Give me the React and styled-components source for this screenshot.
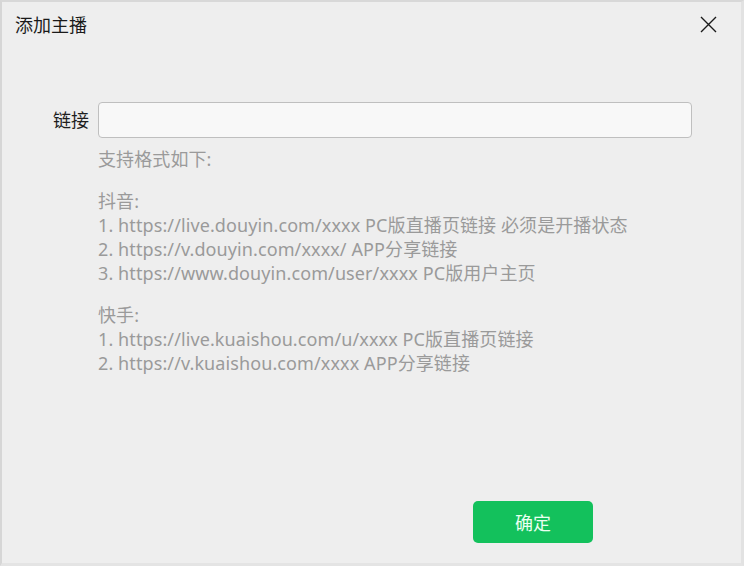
import React from "react";
import styled, { createGlobalStyle } from "styled-components";

const GlobalStyle = createGlobalStyle`
  html, body {
    margin: 0;
    padding: 0;
    background: #eeeeee;
  }
  * { box-sizing: border-box; }
`;

const FONT = `"Noto Sans", "Noto Sans CJK SC", sans-serif`;

const Window = styled.div`
  width: 744px;
  height: 566px;
  background: #eeeeee;
  border-top: 2px solid #d8d8d8;
  border-left: 2px solid #d6d6d6;
  border-right: 3px solid #e2e2e2;
  border-bottom: 3px solid #e4e4e4;
  display: flex;
  flex-direction: column;
  font-family: ${FONT};
`;

const TitleBar = styled.div`
  display: flex;
  align-items: center;
  justify-content: space-between;
  padding: 9px 24px 0 13px;
  height: 36px;
`;

const Title = styled.div`
  font-size: 18px;
  color: #1a1a1a;
  line-height: 24px;
`;

const CloseButton = styled.button`
  width: 18px;
  height: 18px;
  padding: 0;
  border: none;
  background: transparent;
  display: flex;
  align-items: center;
  justify-content: center;
  cursor: pointer;
`;

const Body = styled.div`
  flex: 1;
  padding: 64px 0 0 51px;
  display: flex;
  flex-direction: column;
`;

const FieldRow = styled.div`
  display: flex;
  align-items: center;
  gap: 9px;
`;

const Label = styled.label`
  font-size: 18px;
  color: #1e1e1e;
  line-height: 24px;
  width: 36px;
  white-space: nowrap;
`;

const Input = styled.input`
  width: 594px;
  height: 36px;
  border: 1px solid #bfbfbf;
  border-radius: 4px;
  background: #f8f8f8;
  outline: none;
  font-family: ${FONT};
  font-size: 16px;
  padding: 0 8px;
`;

const Help = styled.div`
  margin: 9px 0 0 45px;
  color: #9a9a9a;
  font-size: 18px;
  line-height: 24px;
  letter-spacing: 0.1px;
`;

const Para = styled.p`
  margin: 0 0 18px 0;
`;

const Line = styled.div`
  white-space: nowrap;
`;

const Footer = styled.div`
  display: flex;
  padding: 0 0 20px 471px;
`;

const PrimaryButton = styled.button`
  width: 120px;
  height: 42px;
  border: none;
  border-radius: 5px;
  background: #13c15c;
  color: #eafff1;
  font-family: ${FONT};
  font-size: 18px;
  cursor: pointer;
`;

const groups = [
  {
    head: "支持格式如下:",
    lines: [],
  },
  {
    head: "抖音:",
    lines: [
      "1. https://live.douyin.com/xxxx PC版直播页链接 必须是开播状态",
      "2. https://v.douyin.com/xxxx/ APP分享链接",
      "3. https://www.douyin.com/user/xxxx PC版用户主页",
    ],
  },
  {
    head: "快手:",
    lines: [
      "1. https://live.kuaishou.com/u/xxxx PC版直播页链接",
      "2. https://v.kuaishou.com/xxxx APP分享链接",
    ],
  },
];

export default function App() {
  return (
    <>
      <GlobalStyle />
      <Window>
        <TitleBar>
          <Title>添加主播</Title>
          <CloseButton aria-label="关闭">
            <svg width="17" height="17" viewBox="0 0 17 17">
              <path d="M1 1 L16 16 M16 1 L1 16" stroke="#1a1a1a" strokeWidth="1.4" fill="none" />
            </svg>
          </CloseButton>
        </TitleBar>
        <Body>
          <FieldRow>
            <Label>链接</Label>
            <Input />
          </FieldRow>
          <Help>
            {groups.map((g) => (
              <Para key={g.head}>
                <Line>{g.head}</Line>
                {g.lines.map((l) => (
                  <Line key={l}>{l}</Line>
                ))}
              </Para>
            ))}
          </Help>
        </Body>
        <Footer>
          <PrimaryButton>确定</PrimaryButton>
        </Footer>
      </Window>
    </>
  );
}
